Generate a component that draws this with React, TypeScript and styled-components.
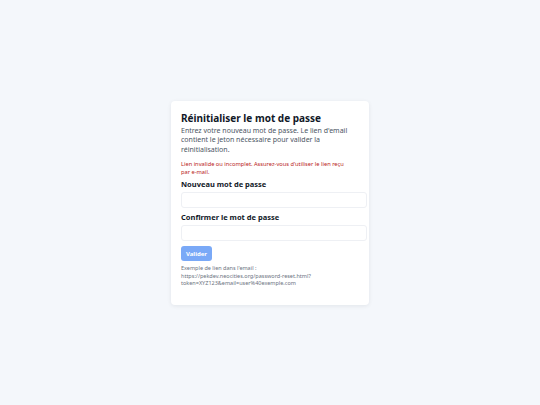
import React from "react";
import styled, { createGlobalStyle } from "styled-components";

const GlobalStyle = createGlobalStyle`
  html, body {
    margin: 0;
    padding: 0;
    background: #f4f7fb;
    font-family: "Noto Sans", "Open Sans", sans-serif;
  }
`;

const Page = styled.div`
  min-height: 100vh;
  display: flex;
  align-items: center;
  justify-content: center;
`;

const Card = styled.div`
  width: 178px;
  padding: 10px 10px 17px;
  background: #ffffff;
  border-radius: 4px;
  box-shadow: 0 1px 4px rgba(15, 23, 42, 0.08);
`;

const Title = styled.h1`
  margin: 0 0 1px;
  font-size: 10px;
  line-height: 14px;
  font-weight: 700;
  color: #111827;
`;

const Intro = styled.p`
  margin: 0 0 7px;
  font-size: 7px;
  line-height: 9.5px;
  color: #4b5563;
`;

const ErrorText = styled.p`
  margin: 0 0 3px;
  padding-right: 6px;
  font-size: 5.7px;
  line-height: 7.5px;
  color: #b91c1c;
`;

const Field = styled.div`
  display: flex;
  flex-direction: column;
  margin-bottom: 4px;
`;

const Label = styled.label`
  font-size: 7.5px;
  line-height: 10px;
  font-weight: 700;
  color: #111827;
  margin-bottom: 3px;
`;

const Input = styled.input`
  box-sizing: content-box;
  width: 100%;
  height: 14px;
  padding: 0 3px;
  margin: 0;
  border: 1px solid #eef0f4;
  border-radius: 3px;
  background: #ffffff;
  font-size: 7px;
  outline: none;
`;

const Button = styled.button<{ $disabled?: boolean }>`
  display: block;
  margin-top: 5px;
  width: 31px;
  height: 15px;
  padding: 0;
  border: none;
  border-radius: 3px;
  background: ${(p) => (p.$disabled ? "#7aa9f7" : "#3b82f6")};
  color: #ffffff;
  font-family: inherit;
  font-size: 6px;
  font-weight: 700;
`;

const Hint = styled.p`
  margin: 4px 0 0;
  font-size: 5.5px;
  line-height: 7.5px;
  color: #6b7280;
`;

export default function App() {
  return (
    <>
      <GlobalStyle />
      <Page>
        <Card>
          <Title>Réinitialiser le mot de passe</Title>
          <Intro>
            Entrez votre nouveau mot de passe. Le lien d'email contient le jeton nécessaire pour valider la
            réinitialisation.
          </Intro>
          <ErrorText>Lien invalide ou incomplet. Assurez-vous d'utiliser le lien reçu par e-mail.</ErrorText>
          <Field>
            <Label>Nouveau mot de passe</Label>
            <Input type="password" />
          </Field>
          <Field>
            <Label>Confirmer le mot de passe</Label>
            <Input type="password" />
          </Field>
          <Button $disabled>Valider</Button>
          <Hint>
            Exemple de lien dans l'email :
            <br />
            https://pekdev.neocities.org/password-reset.html?token=XYZ123&amp;email=user%40exemple.com
          </Hint>
        </Card>
      </Page>
    </>
  );
}
